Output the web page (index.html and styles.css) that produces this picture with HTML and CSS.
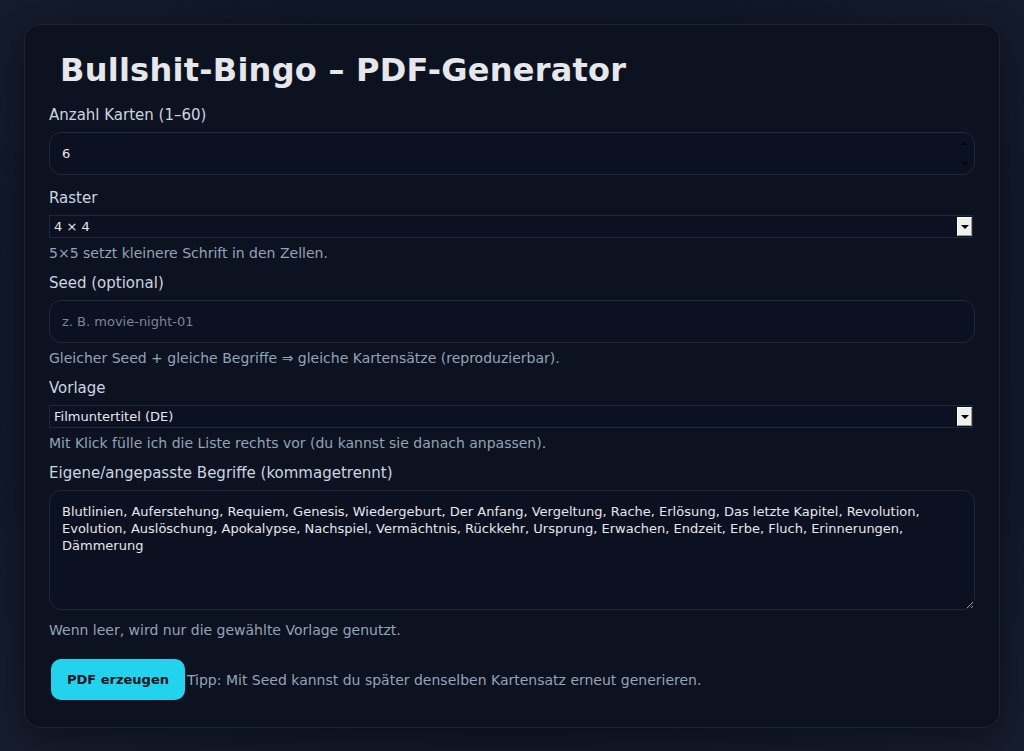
FILE: index.html
```html
<!DOCTYPE html>
<html lang="de">
<head>
<meta charset="utf-8">
<title>Bullshit-Bingo – PDF-Generator</title>
<link rel="stylesheet" href="styles.css">
</head>
<body>
<main class="card">
  <h1 class="title">Bullshit-Bingo – PDF-Generator</h1>
  <form class="form" onsubmit="return false">
    <label class="label label-first" for="count">Anzahl Karten (1–60)</label>
    <div class="control-wrap">
      <input class="input" id="count" type="number" min="1" max="60" value="6">
      <span class="spin" aria-hidden="true"><span class="spin-up"></span><span class="spin-down"></span></span>
    </div>

    <label class="label" for="grid">Raster</label>
    <div class="control-wrap select-wrap">
      <select class="select" id="grid">
        <option>4 × 4</option>
        <option>5 × 5</option>
      </select>
      <span class="select-arrow" aria-hidden="true"></span>
    </div>
    <p class="hint hint-after-select">5×5 setzt kleinere Schrift in den Zellen.</p>

    <label class="label label-after-hint" for="seed">Seed (optional)</label>
    <input class="input" id="seed" type="text" placeholder="z. B. movie-night-01">
    <p class="hint">Gleicher Seed + gleiche Begriffe ⇒ gleiche Kartensätze (reproduzierbar).</p>

    <label class="label label-after-hint" for="tpl">Vorlage</label>
    <div class="control-wrap select-wrap">
      <select class="select" id="tpl">
        <option>Filmuntertitel (DE)</option>
      </select>
      <span class="select-arrow" aria-hidden="true"></span>
    </div>
    <p class="hint hint-after-select">Mit Klick fülle ich die Liste rechts vor (du kannst sie danach anpassen).</p>

    <label class="label label-after-hint" for="terms">Eigene/angepasste Begriffe (kommagetrennt)</label>
    <textarea class="textarea" id="terms">Blutlinien, Auferstehung, Requiem, Genesis, Wiedergeburt, Der Anfang, Vergeltung, Rache, Erlösung, Das letzte Kapitel, Revolution, Evolution, Auslöschung, Apokalypse, Nachspiel, Vermächtnis, Rückkehr, Ursprung, Erwachen, Endzeit, Erbe, Fluch, Erinnerungen, Dämmerung</textarea>
    <p class="hint hint-after-textarea">Wenn leer, wird nur die gewählte Vorlage genutzt.</p>

    <div class="actions">
      <button class="button" type="submit">PDF erzeugen</button>
      <span class="tip">Tipp: Mit Seed kannst du später denselben Kartensatz erneut generieren.</span>
    </div>
  </form>
</main>
</body>
</html>
```

FILE: styles.css
```css
html, body {
  height: 100%;
}

body {
  margin: 0;
  padding: 24px;
  box-sizing: border-box;
  font-family: "DejaVu Sans", "Liberation Sans", sans-serif;
  color: #e5e7eb;
  background: radial-gradient(ellipse at 50% 45%, #0c1220 0%, #0f1626 60%, #161d2d 100%);
}

.card {
  background: #0c1220;
  border: 1px solid #1c2536;
  border-radius: 16px;
  padding: 24px 24px 25px;
  box-shadow: 0 10px 30px rgba(0, 0, 0, 0.35);
}

.title {
  margin: 0;
  padding: 2px 11px 0;
  font-size: 32px;
  line-height: 38px;
  font-weight: 700;
  letter-spacing: 0.25px;
  color: #e5e7eb;
}

.form {
  display: flex;
  flex-direction: column;
  align-items: stretch;
}

.label {
  display: block;
  font-size: 15px;
  line-height: 19px;
  color: #cbd5e1;
  margin: 14px 0 7px;
}

.label-first {
  margin-top: 17px;
}

.label-after-hint {
  margin-top: 12px;
}

.control-wrap {
  position: relative;
  display: flex;
  flex-direction: column;
}

.input {
  box-sizing: border-box;
  height: 43px;
  padding: 0 12px;
  font-family: "DejaVu Sans", sans-serif;
  font-size: 13px;
  color: #e5e7eb;
  background: #0b1120;
  border: 1px solid #1e293b;
  border-radius: 12px;
  outline: none;
}

.input::placeholder {
  color: #7c8596;
}

.input::-webkit-inner-spin-button,
.input::-webkit-outer-spin-button {
  -webkit-appearance: none;
  margin: 0;
}

.spin {
  position: absolute;
  right: 7px;
  top: 10px;
  bottom: 10px;
  width: 6px;
  display: flex;
  flex-direction: column;
  justify-content: space-between;
  align-items: center;
  pointer-events: none;
}

.spin-up {
  width: 0;
  height: 0;
  border-left: 3px solid transparent;
  border-right: 3px solid transparent;
  border-bottom: 3px solid #02040a;
}

.spin-down {
  width: 0;
  height: 0;
  border-left: 3px solid transparent;
  border-right: 3px solid transparent;
  border-top: 3px solid #02040a;
}

.select-wrap {
  margin-right: 2px;
}

.select {
  box-sizing: border-box;
  height: 23px;
  padding: 0 20px 0 4px;
  -webkit-appearance: none;
  appearance: none;
  font-family: "DejaVu Sans", sans-serif;
  font-size: 13px;
  color: #e5e7eb;
  background-color: #0b1120;
  border: 1px solid #1e293b;
  border-radius: 0;
  outline: none;
}

.select-arrow {
  position: absolute;
  right: 1px;
  top: 2px;
  bottom: 2px;
  width: 15px;
  box-sizing: border-box;
  background: #efefec;
  border-top: 1px solid #ffffff;
  border-left: 1px solid #ffffff;
  border-right: 1px solid #9a9a96;
  border-bottom: 1px solid #9a9a96;
  display: flex;
  align-items: center;
  justify-content: center;
  pointer-events: none;
}

.select-arrow::after {
  content: "";
  width: 0;
  height: 0;
  margin-top: 1px;
  border-left: 4px solid transparent;
  border-right: 4px solid transparent;
  border-top: 4px solid #000000;
}

.textarea {
  box-sizing: border-box;
  height: 120px;
  padding: 12px;
  font-family: "DejaVu Sans", sans-serif;
  font-size: 13px;
  line-height: 17px;
  color: #e5e7eb;
  background: #0b1120;
  border: 1px solid #1e293b;
  border-radius: 12px;
  outline: none;
}

.hint {
  margin: 7px 0 0;
  font-size: 14px;
  line-height: 17px;
  color: #94a3b8;
}

.hint-after-select {
  margin-top: 7px;
}

.hint-after-textarea {
  margin-top: 12px;
}

.actions {
  display: flex;
  align-items: center;
  margin-top: 18px;
}

.button {
  margin: 2px;
  padding: 0 16px;
  height: 41px;
  border: 0;
  border-radius: 10px;
  background: #22d3ee;
  color: #0b1220;
  font-family: "DejaVu Sans", sans-serif;
  font-size: 13px;
  font-weight: 700;
  cursor: pointer;
}

.tip {
  font-size: 14px;
  color: #94a3b8;
}
```
